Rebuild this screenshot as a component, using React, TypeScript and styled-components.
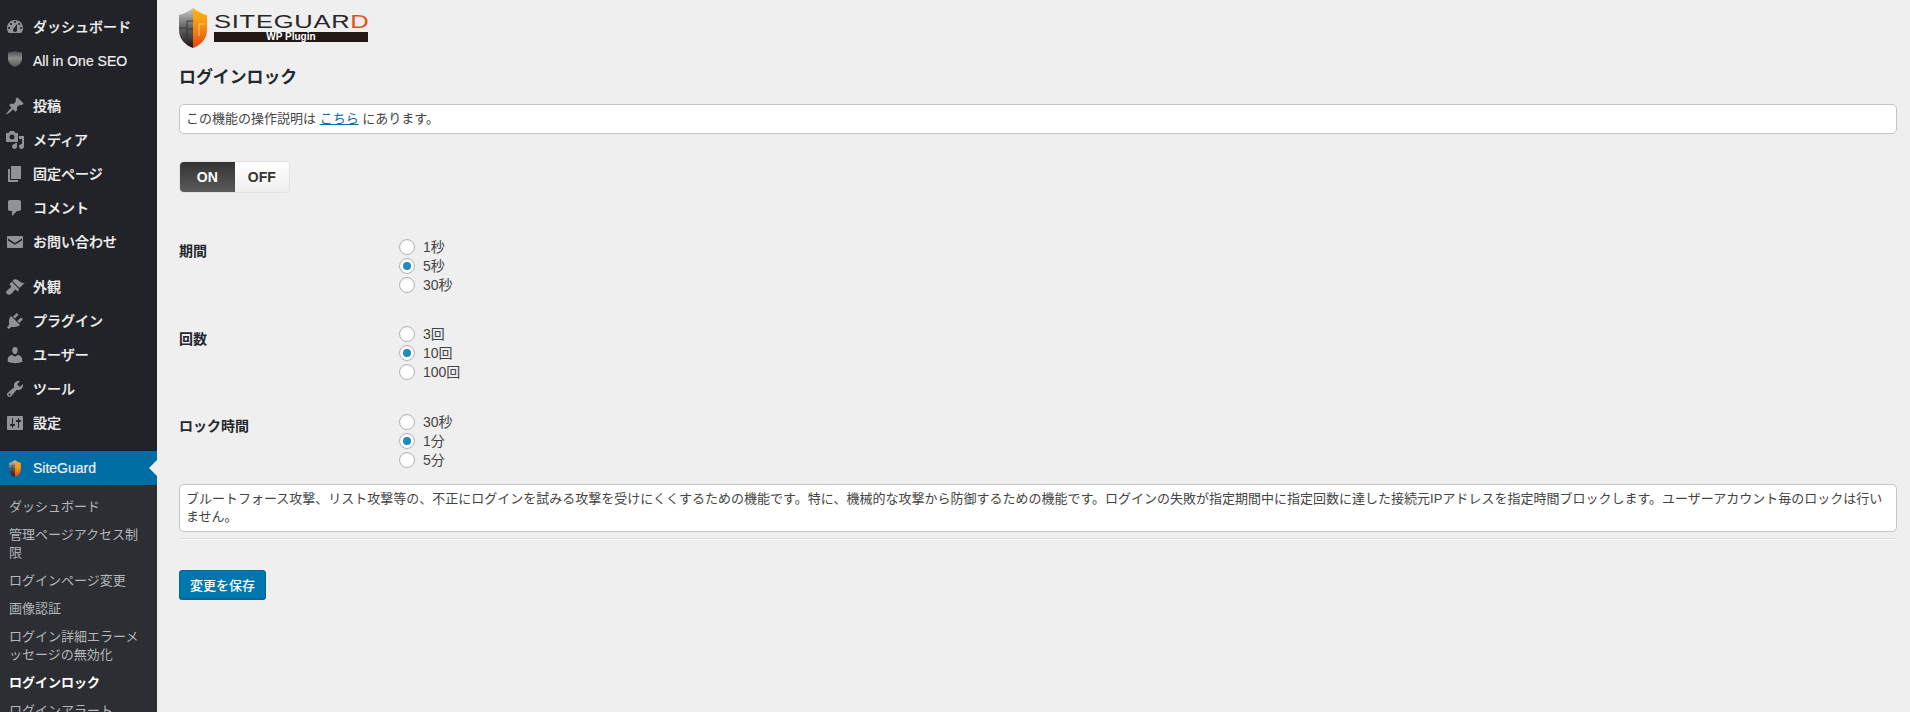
import React from "react";
import styled, { createGlobalStyle } from "styled-components";

const FONT = `"Liberation Sans", "Noto Sans CJK JP", sans-serif`;

const GlobalStyle = createGlobalStyle`
  html, body {
    margin: 0;
    padding: 0;
    height: 100%;
    overflow: hidden;
    background: #efefef;
    font-family: ${FONT};
    font-size: 13px;
    line-height: 18px;
    color: #444;
  }
`;

const Page = styled.div`
  display: flex;
  height: 712px;
  overflow: hidden;
`;

const Sidebar = styled.nav`
  flex: 0 0 157px;
  width: 157px;
  height: 712px;
  overflow: hidden;
  background: #212328;
  padding-top: 10px;
  box-sizing: border-box;
`;

const MenuGroup = styled.div`
  margin-bottom: 11px;
`;

const MenuItem = styled.div<{ $current?: boolean }>`
  position: relative;
  display: flex;
  align-items: center;
  height: 34px;
  font-size: 14px;
  font-weight: 500;
  -webkit-text-stroke: 0.2px;
  color: #f0f0f0;
  background: ${(p) => (p.$current ? "#006da5" : "transparent")};
`;

const IconSlot = styled.span`
  flex: 0 0 33px;
  display: flex;
  justify-content: center;
  padding-right: 3px;
  box-sizing: border-box;
`;

const CurrentArrow = styled.span`
  position: absolute;
  right: 0;
  top: 9px;
  border: 8px solid transparent;
  border-left-width: 0;
  border-right-color: #efefef;
`;

const SubMenu = styled.div`
  background: #2c2e33;
  padding: 8px 12px 7px 9px;
  margin-top: -11px;
  line-break: anywhere;
`;

const SubItem = styled.div<{ $current?: boolean }>`
  padding: 5px 0;
  font-size: 13px;
  line-height: 18px;
  font-weight: ${(p) => (p.$current ? 700 : 400)};
  color: ${(p) => (p.$current ? "#ffffff" : "#b4b7bb")};
`;

const Main = styled.main`
  flex: 1;
  min-width: 0;
  padding: 8px 13px 0 22px;
`;

const Logo = styled.div`
  display: flex;
  gap: 7px;
  height: 40px;
`;

const LogoWords = styled.div`
  width: 154px;
  padding-top: 5px;
`;

const LogoName = styled.div`
  font-size: 18px;
  line-height: 18px;
  letter-spacing: 0.5px;
  white-space: nowrap;
  color: #2a2526;
  transform: scaleX(1.42);
  transform-origin: left center;

  & span {
    color: #e8501a;
  }
`;

const LogoBar = styled.div`
  margin-top: 1px;
  height: 10px;
  background: #231815;
  color: #fff;
  font-size: 10px;
  line-height: 10px;
  font-weight: 700;
  text-align: center;
`;

const Title = styled.h2`
  margin: 18px 0 14px;
  font-size: 16.9px;
  line-height: 24px;
  font-weight: 700;
  color: #23282d;
`;

const Box = styled.div`
  background: #fff;
  border: 1px solid #c4c4c4;
  border-radius: 5px;
  padding: 5px 6px;
`;

const HelpLink = styled.a`
  color: #0073aa;
  text-decoration: underline;
`;

const ToggleRow = styled.div`
  height: 103px;
`;

const Toggle = styled.div`
  display: inline-flex;
  margin: 28px 0 0 1px;
  height: 30px;
  width: 109px;
  border-radius: 4px;
  overflow: hidden;
  box-shadow: 0 0 0 1px #e2e2e2;
  vertical-align: top;
`;

const ToggleSide = styled.div<{ $on?: boolean }>`
  flex: 1;
  display: flex;
  align-items: center;
  justify-content: center;
  font-size: 14px;
  font-weight: 700;
  color: ${(p) => (p.$on ? "#fff" : "#333")};
  background: ${(p) =>
    p.$on
      ? "linear-gradient(#333333, #5a5a5a)"
      : "linear-gradient(#ffffff, #efefef)"};
`;

const OptionList = styled.div`
  display: flex;
  flex-direction: column;
  gap: 30.5px;
  margin-bottom: 15px;
`;

const Option = styled.div`
  display: grid;
  grid-template-columns: 220px 1fr;
`;

const OptionLabel = styled.div`
  padding-top: 5px;
  font-size: 14px;
  font-weight: 700;
  color: #23282d;
`;

const RadioList = styled.div`
  display: flex;
  flex-direction: column;
`;

const RadioRow = styled.label`
  display: flex;
  align-items: center;
  gap: 8px;
  height: 19px;
  font-size: 14px;
`;

const RadioInput = styled.input`
  appearance: none;
  margin: 0;
  width: 16px;
  height: 16px;
  box-sizing: border-box;
  border: 1px solid #b0b4b8;
  border-radius: 50%;
  background: #fff;
  box-shadow: inset 0 1px 2px rgba(0, 0, 0, 0.07);
  display: grid;
  place-items: center;

  &:checked::before {
    content: "";
    width: 8px;
    height: 8px;
    border-radius: 50%;
    background: #1e8cbe;
  }
`;

const Rule = styled.hr`
  margin: 6px 0 30px;
  border: none;
  border-top: 1px solid #ddd;
  border-bottom: 1px solid #fafafa;
`;

const SaveButton = styled.button`
  display: block;
  width: 87px;
  height: 29px;
  padding: 0;
  background: #0076ae;
  border: 1px solid #006799;
  border-radius: 3px;
  box-shadow: 0 1px 0 #006799;
  color: #fff;
  font-family: ${FONT};
  font-size: 13px;
  font-weight: 500;
`;

const Icon = ({ d, fill = "#8f9397" }: { d: string; fill?: string }) => (
  <svg width="20" height="20" viewBox="0 0 20 20" fill={fill} fillRule="evenodd">
    <path d={d} />
  </svg>
);

const ICONS = {
  dashboard:
    "M3.76 16h12.48c1.1-1.37 1.76-3.11 1.76-5 0-4.42-3.58-8-8-8s-8 3.58-8 8c0 1.89.66 3.63 1.76 5zM10 4c.55 0 1 .45 1 1s-.45 1-1 1-1-.45-1-1 .45-1 1-1zM6 6c.55 0 1 .45 1 1s-.45 1-1 1-1-.45-1-1 .45-1 1-1zm8 0c.55 0 1 .45 1 1s-.45 1-1 1-1-.45-1-1 .45-1 1-1zm-5.37 5.55L12 7v6c0 1.1-.9 2-2 2s-2-.9-2-2c0-.57.24-1.08.63-1.45zM4 10c.55 0 1 .45 1 1s-.45 1-1 1-1-.45-1-1 .45-1 1-1zm12 0c.55 0 1 .45 1 1s-.45 1-1 1-1-.45-1-1 .45-1 1-1z",
  pin: "M10.44 3.02l1.82-1.82 6.36 6.35-1.83 1.82c-1.05-.68-2.48-.57-3.41.36l-.75.75c-.92.93-1.04 2.35-.35 3.41l-1.83 1.82-2.41-2.41-2.8 2.79c-.42.42-3.38 2.71-3.8 2.29s1.86-3.39 2.28-3.81l2.79-2.79L4.1 9.36l1.83-1.82c1.05.69 2.48.57 3.4-.36l.75-.75c.93-.92 1.05-2.35.36-3.41z",
  media:
    "M13 11V4c0-.55-.45-1-1-1h-1.67L9 1H5L3.67 3H2c-.55 0-1 .45-1 1v7c0 .55.45 1 1 1h10c.55 0 1-.45 1-1zM7 4.5c1.38 0 2.5 1.12 2.5 2.5S8.38 9.5 7 9.5 4.5 8.38 4.5 7 5.62 4.5 7 4.5zM14 6h5v10.5c0 1.38-1.12 2.5-2.5 2.5S14 17.88 14 16.5s1.12-2.5 2.5-2.5c.17 0 .34.02.5.05V9h-3V6zm-4 8.05V13h2v3.5c0 1.38-1.12 2.5-2.5 2.5S7 17.88 7 16.5 8.12 14 9.5 14c.17 0 .34.02.5.05z",
  page: "M6 15V2h10v13H6zm-1 1h8v2H3V5h2v11z",
  comment:
    "M5 2h9c1.1 0 2 .9 2 2v7c0 1.1-.9 2-2 2h-2l-5 5v-5H5c-1.1 0-2-.9-2-2V4c0-1.1.9-2 2-2z",
  mail: "M3 4h14c.55 0 1 .45 1 1v10c0 .55-.45 1-1 1H3c-.55 0-1-.45-1-1V5c0-.55.45-1 1-1zm14 2.6L10 11 3 6.6V8.4l7 4.4 7-4.4V6.6z",
  brush:
    "M14.48 11.06L7.41 3.99l1.5-1.5c.5-.56 2.3-.47 3.51.32 1.21.8 1.43 1.28 2.91 2.1 1.18.64 2.45 1.26 4.45.85zm-.71.71L6.7 4.7 4.93 6.47c-.39.39-.39 1.02 0 1.41l1.06 1.06c.39.39.39 1.03 0 1.42-.6.6-1.43 1.11-2.21 1.69-.35.26-.7.53-1.01.84C1.43 13.23.5 15.5 2 17c1.5 1.5 3.77.57 5.09-.75.31-.31.58-.66.84-1.01.58-.78 1.09-1.61 1.69-2.21.39-.39 1.03-.39 1.42 0l1.06 1.06c.39.39 1.02.39 1.41 0z",
  plugin:
    "M13.11 4.36L9.87 7.6 8 5.73l3.24-3.24c.35-.34 1.05-.2 1.56.32.52.51.66 1.21.31 1.55zm-8 1.77l.91-1.12 9.01 9.01-1.19.84c-.71.71-2.63 1.16-3.82 1.16H6.14L4.9 17.26c-.59.59-1.54.59-2.12 0-.59-.58-.59-1.53 0-2.12l1.24-1.24v-3.88c0-1.13.4-3.19 1.09-3.89zm7.26 3.97l3.24-3.24c.34-.35 1.04-.21 1.55.31.52.51.66 1.21.31 1.55l-3.24 3.25z",
  user: "M10 9.25c-2.27 0-2.73-3.44-2.73-3.44C7 4.02 7.82 2 9.97 2c2.16 0 2.98 2.02 2.71 3.81 0 0-.41 3.44-2.68 3.44zm0 2.57L12.72 10c2.39 0 4.52 2.33 4.52 4.53v2.49s-3.65 1.13-7.24 1.13c-3.65 0-7.24-1.13-7.24-1.13v-2.49c0-2.25 1.94-4.48 4.47-4.48z",
  tool: "M16.68 9.77c-1.34 1.34-3.3 1.67-4.95.99l-5.41 6.52c-.99.99-2.59.99-3.58 0s-.99-2.59 0-3.57l6.52-5.42c-.68-1.65-.35-3.61.99-4.95 1.28-1.28 3.12-1.62 4.72-1.06l-2.89 2.89 2.82 2.82 2.86-2.87c.53 1.58.18 3.39-1.08 4.65zM3.81 16.21c.4.39 1.04.39 1.43 0 .4-.4.4-1.04 0-1.43-.39-.4-1.03-.4-1.43 0-.39.39-.39 1.03 0 1.43z",
  settings:
    "M18 16V4c0-.55-.45-1-1-1H3c-.55 0-1 .45-1 1v12c0 .55.45 1 1 1h14c.55 0 1-.45 1-1zM8 11h1c.55 0 1 .45 1 1s-.45 1-1 1H8v1.5c0 .28-.22.5-.5.5s-.5-.22-.5-.5V13H6c-.55 0-1-.45-1-1s.45-1 1-1h1V5.5c0-.28.22-.5.5-.5s.5.22.5.5V11zm5-2h-1c-.55 0-1-.45-1-1s.45-1 1-1h1V5.5c0-.28.22-.5.5-.5s.5.22.5.5V7h1c.55 0 1 .45 1 1s-.45 1-1 1h-1v5.5c0 .28-.22.5-.5.5s-.5-.22-.5-.5V9z",
};

const SeoShield = () => (
  <svg width="20" height="20" viewBox="0 0 20 20">
    <defs>
      <linearGradient id="seo" x1="0" y1="0" x2="0" y2="1">
        <stop offset="0" stopColor="#4a4c4e" />
        <stop offset="0.45" stopColor="#8a8c8c" />
        <stop offset="1" stopColor="#55575a" />
      </linearGradient>
    </defs>
    <path d="M10 0c2.4 1 4.6 1.4 7 1.4v6.2c0 4-3 7.2-7 8.4-4-1.2-7-4.4-7-8.4V1.4C5.4 1.4 7.6 1 10 0z" fill="url(#seo)" />
  </svg>
);

const GuardShield = ({ size, id }: { size: number; id: string }) => (
  <svg width={size * 0.7} height={size} viewBox="0 0 28 40">
    <defs>
      <linearGradient id={`${id}-l`} x1="0" y1="0" x2="0" y2="1">
        <stop offset="0" stopColor="#c9c9c9" />
        <stop offset="0.45" stopColor="#6b6b6b" />
        <stop offset="1" stopColor="#1c1614" />
      </linearGradient>
      <linearGradient id={`${id}-r`} x1="0" y1="0" x2="0" y2="1">
        <stop offset="0" stopColor="#fdb813" />
        <stop offset="0.5" stopColor="#f58a12" />
        <stop offset="1" stopColor="#e8420f" />
      </linearGradient>
    </defs>
    <path d="M14 0 L14 40 C6 37 0 31 0 22 V7 C5 6 10 3 14 0z" fill={`url(#${id}-l)`} />
    <path d="M14 0 C18 3 23 6 28 7 V22 C28 31 22 37 14 40z" fill={`url(#${id}-r)`} />
    <path d="M0 20 H8 V13 H14 M14 21 H8 V30" fill="none" stroke="#2e2e2e" strokeWidth="0.9" />
    <path d="M20 16 H26 M20 16 V28" fill="none" stroke="#ffd27a" strokeWidth="0.9" />
  </svg>
);

const TOP_GROUPS: { icon: string; label: string }[][] = [
  [
    { icon: "dashboard", label: "ダッシュボード" },
    { icon: "seo", label: "All in One SEO" },
  ],
  [
    { icon: "pin", label: "投稿" },
    { icon: "media", label: "メディア" },
    { icon: "page", label: "固定ページ" },
    { icon: "comment", label: "コメント" },
    { icon: "mail", label: "お問い合わせ" },
  ],
  [
    { icon: "brush", label: "外観" },
    { icon: "plugin", label: "プラグイン" },
    { icon: "user", label: "ユーザー" },
    { icon: "tool", label: "ツール" },
    { icon: "settings", label: "設定" },
  ],
];

const SUB_ITEMS = [
  "ダッシュボード",
  "管理ページアクセス制限",
  "ログインページ変更",
  "画像認証",
  "ログイン詳細エラーメッセージの無効化",
  "ログインロック",
  "ログインアラート",
];

const OPTIONS = [
  { name: "period", label: "期間", values: ["1秒", "5秒", "30秒"], checked: 1 },
  { name: "count", label: "回数", values: ["3回", "10回", "100回"], checked: 1 },
  { name: "lock", label: "ロック時間", values: ["30秒", "1分", "5分"], checked: 1 },
];

const App = () => {
  return (
    <Page>
      <GlobalStyle />
      <Sidebar>
        {TOP_GROUPS.map((group, i) => (
          <MenuGroup key={i}>
            {group.map((item) => (
              <MenuItem key={item.label}>
                <IconSlot>
                  {item.icon === "seo" ? (
                    <SeoShield />
                  ) : (
                    <Icon d={ICONS[item.icon as keyof typeof ICONS]} />
                  )}
                </IconSlot>
                {item.label}
              </MenuItem>
            ))}
          </MenuGroup>
        ))}
        <MenuGroup>
          <MenuItem $current>
            <IconSlot>
              <GuardShield size={17} id="menu-guard" />
            </IconSlot>
            SiteGuard
            <CurrentArrow />
          </MenuItem>
        </MenuGroup>
        <SubMenu>
          {SUB_ITEMS.map((label) => (
            <SubItem key={label} $current={label === "ログインロック"}>
              {label}
            </SubItem>
          ))}
        </SubMenu>
      </Sidebar>
      <Main>
        <Logo>
          <GuardShield size={40} id="logo-guard" />
          <LogoWords>
            <LogoName>
              SITEGUAR<span>D</span>
            </LogoName>
            <LogoBar>WP Plugin</LogoBar>
          </LogoWords>
        </Logo>
        <Title>ログインロック</Title>
        <Box>
          この機能の操作説明は <HelpLink href="#">こちら</HelpLink> にあります。
        </Box>
        <ToggleRow>
          <Toggle>
            <ToggleSide $on>ON</ToggleSide>
            <ToggleSide>OFF</ToggleSide>
          </Toggle>
        </ToggleRow>
        <OptionList>
          {OPTIONS.map((option) => (
            <Option key={option.name}>
              <OptionLabel>{option.label}</OptionLabel>
              <RadioList>
                {option.values.map((value, i) => (
                  <RadioRow key={value}>
                    <RadioInput
                      type="radio"
                      name={option.name}
                      defaultChecked={i === option.checked}
                    />
                    {value}
                  </RadioRow>
                ))}
              </RadioList>
            </Option>
          ))}
        </OptionList>
        <Box>
          ブルートフォース攻撃、リスト攻撃等の、不正にログインを試みる攻撃を受けにくくするための機能です。特に、機械的な攻撃から防御するための機能です。ログインの失敗が指定期間中に指定回数に達した接続元IPアドレスを指定時間ブロックします。ユーザーアカウント毎のロックは行いません。
        </Box>
        <Rule />
        <SaveButton type="button">変更を保存</SaveButton>
      </Main>
    </Page>
  );
};

export default App;
